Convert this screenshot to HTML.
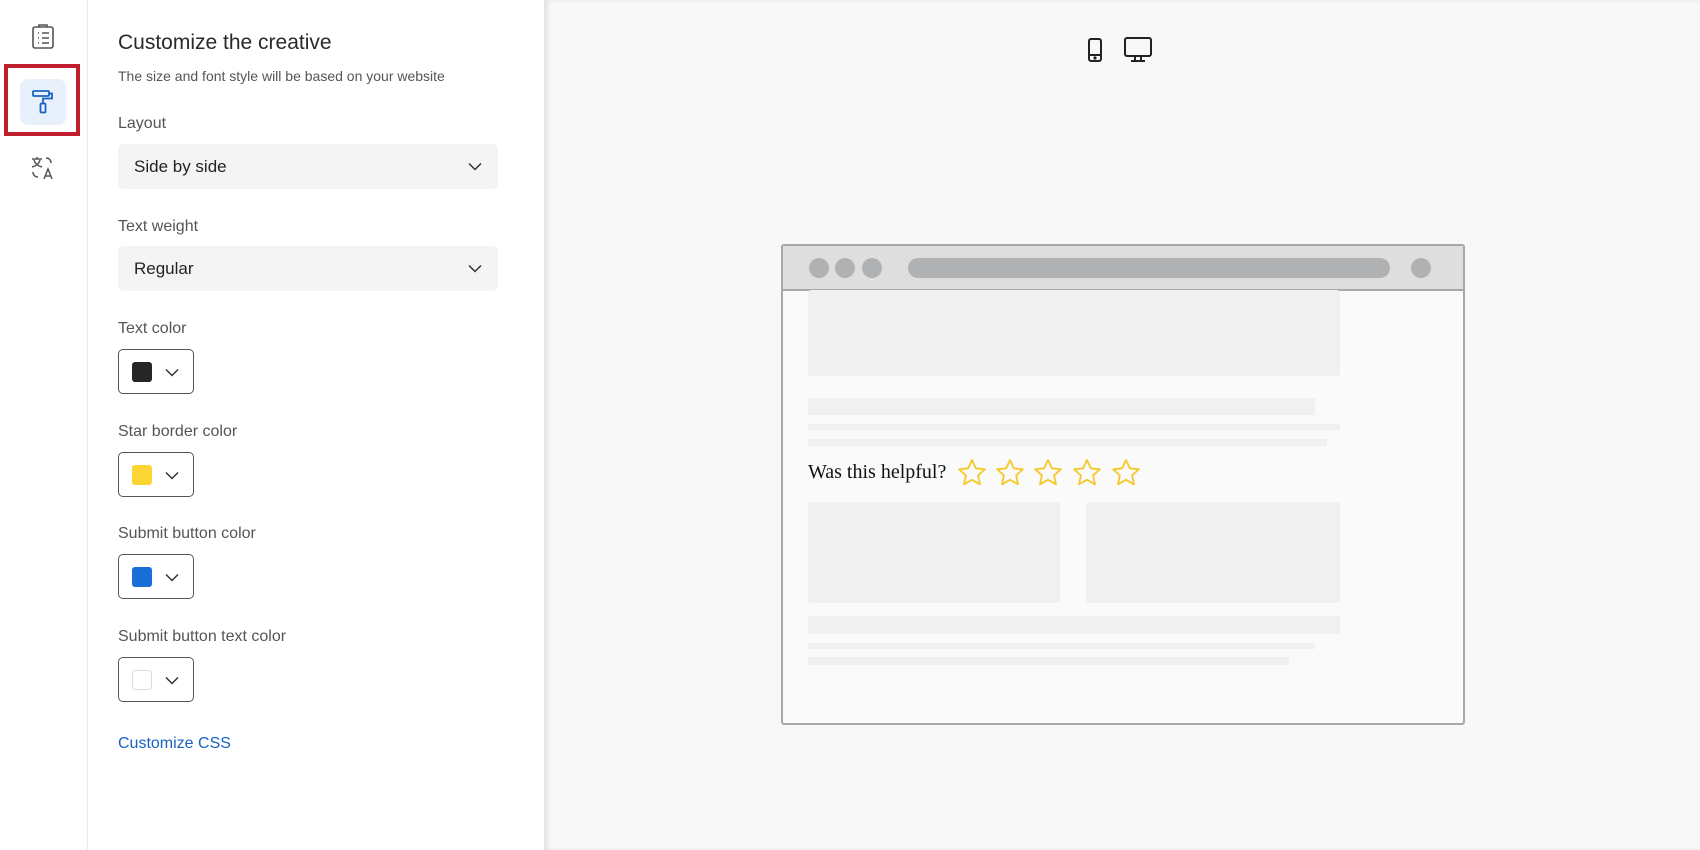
<!DOCTYPE html>
<html><head><style>
*{box-sizing:border-box;margin:0;padding:0}
body{width:1700px;height:850px;overflow:hidden;font-family:"Liberation Sans",sans-serif;background:#fff;position:relative;color:#32363a}
.a{position:absolute}
.lbl{position:absolute;left:118px;font-size:16px;color:#555}
.sel{position:absolute;left:118px;width:380px;height:45px;background:#f4f4f5;border-radius:6px;font-size:17px;color:#222;padding:13px 16px}
.chev{position:absolute;right:16px;top:18px}
.sw{position:absolute;left:118px;width:76px;height:45px;border:1px solid #555;border-radius:5px}
.sw i{position:absolute;left:13px;top:12px;width:20px;height:20px;border-radius:3px}
.sw svg{position:absolute;left:46px;top:18px}
.g{position:absolute;background:#f0f0f0}
</style></head><body>
<div class="a" style="left:87px;top:0;width:1px;height:850px;background:#eaeaea"></div>
<svg class="a" style="left:30px;top:22px" width="26" height="28" viewBox="0 0 26 28" fill="none" stroke="#555" stroke-width="1.6"><rect x="3" y="5" width="20" height="21" rx="2"/><path d="M9 5V3h8v2"/><path d="M8 11h1M8 16h1M8 21h1M12 11h7M12 16h7M12 21h7"/></svg>
<div class="a" style="left:4px;top:64px;width:76px;height:72px;border:4px solid #c0202e"></div>
<div class="a" style="left:20px;top:79px;width:46px;height:46px;background:#e8f0fb;border-radius:8px"></div>
<svg class="a" style="left:30px;top:88px" width="26" height="28" viewBox="0 0 26 28" fill="none" stroke="#1a62c2" stroke-width="1.8"><rect x="3" y="3" width="16" height="5" rx="1"/><path d="M19 5.5h3v5H13v5"/><rect x="10.5" y="15.5" width="5" height="9" rx="1"/></svg>
<svg class="a" style="left:30px;top:155px" width="26" height="26" viewBox="0 0 26 26" fill="none" stroke="#555" stroke-width="1.5"><path d="M2 4h10M7 2v2M4 5c1 4 4 6 8 7M10 5c-1 4-4 6-8 7"/><path d="M16 3c3 0 5 2 5 5"/><path d="M3 17c0 3 2 5 5 5"/><path d="M14 24l4-10 4 10M15.5 21h5"/></svg>
<div class="a" style="left:118px;top:31px;font-size:21px;color:#2a2a2a">Customize the creative</div>
<div class="a" style="left:118px;top:68px;font-size:14px;color:#555">The size and font style will be based on your website</div>
<div class="lbl" style="top:115px">Layout</div>
<div class="sel" style="top:144px">Side by side<svg class="chev" width="14" height="9" viewBox="0 0 14 9" fill="none" stroke="#333" stroke-width="1.5"><path d="M1 1.5l6 6 6-6"/></svg></div>
<div class="lbl" style="top:218px">Text weight</div>
<div class="sel" style="top:246px">Regular<svg class="chev" width="14" height="9" viewBox="0 0 14 9" fill="none" stroke="#333" stroke-width="1.5"><path d="M1 1.5l6 6 6-6"/></svg></div>
<div class="lbl" style="top:320px">Text color</div>
<div class="sw" style="top:349px"><i style="background:#262626"></i><svg width="14" height="9" viewBox="0 0 14 9" fill="none" stroke="#333" stroke-width="1.5"><path d="M1 1.5l6 6 6-6"/></svg></div>
<div class="lbl" style="top:423px">Star border color</div>
<div class="sw" style="top:452px"><i style="background:#fcd535"></i><svg width="14" height="9" viewBox="0 0 14 9" fill="none" stroke="#333" stroke-width="1.5"><path d="M1 1.5l6 6 6-6"/></svg></div>
<div class="lbl" style="top:525px">Submit button color</div>
<div class="sw" style="top:554px"><i style="background:#1a6ed8"></i><svg width="14" height="9" viewBox="0 0 14 9" fill="none" stroke="#333" stroke-width="1.5"><path d="M1 1.5l6 6 6-6"/></svg></div>
<div class="lbl" style="top:628px">Submit button text color</div>
<div class="sw" style="top:657px"><i style="background:#fff;border:1px solid #ddd"></i><svg width="14" height="9" viewBox="0 0 14 9" fill="none" stroke="#333" stroke-width="1.5"><path d="M1 1.5l6 6 6-6"/></svg></div>
<div class="a" style="left:118px;top:735px;font-size:16px;color:#1a62c2">Customize CSS</div>

<div class="a" style="left:544px;top:0;width:1156px;height:850px;background:#f8f8f8;box-shadow:inset 3px 0 4px rgba(0,0,0,0.08);border-left:1px solid #e4e4e4"></div>
<svg class="a" style="left:1086px;top:37px" width="18" height="26" viewBox="0 0 18 26" fill="none" stroke="#222" stroke-width="2"><rect x="3" y="2" width="12" height="22" rx="2"/><path d="M3 18h12"/><circle cx="9" cy="21" r=".6" fill="#222"/></svg>
<svg class="a" style="left:1122px;top:36px" width="32" height="28" viewBox="0 0 32 28" fill="none" stroke="#222" stroke-width="2"><rect x="3" y="2" width="26" height="18" rx="2"/><path d="M13 20v4M19 20v4M9 25h14"/></svg>

<div class="a" style="left:781px;top:244px;width:684px;height:481px;border:2px solid #a8a8a8;border-radius:3px;background:#fafafa">
<div class="a" style="left:0;top:0;width:680px;height:45px;background:#dedede;border-bottom:2px solid #a8a8a8"></div>
<div class="a" style="left:26px;top:12px;width:20px;height:20px;border-radius:50%;background:#b0b1b3"></div>
<div class="a" style="left:52px;top:12px;width:20px;height:20px;border-radius:50%;background:#b0b1b3"></div>
<div class="a" style="left:79px;top:12px;width:20px;height:20px;border-radius:50%;background:#b0b1b3"></div>
<div class="a" style="left:125px;top:12px;width:482px;height:20px;border-radius:10px;background:#b0b1b3"></div>
<div class="a" style="left:628px;top:12px;width:20px;height:20px;border-radius:50%;background:#b0b1b3"></div>
</div>
<div class="g" style="left:808px;top:290px;width:532px;height:86px;border-radius:3px"></div>
<div class="g" style="left:808px;top:398px;width:507px;height:17px"></div>
<div class="g" style="left:808px;top:424px;width:532px;height:6px"></div>
<div class="g" style="left:808px;top:439px;width:519px;height:7px"></div>
<div class="a" style="left:808px;top:461px;font-family:'Liberation Serif',serif;font-size:20px;color:#111">Was this helpful?</div>
<svg class="a" style="left:957px;top:458px" width="190" height="30" viewBox="0 0 190 30" fill="none" stroke="#f5c829" stroke-width="1.8" stroke-linejoin="round">
<g id="s"><path d="M15 2l3.8 8.3 9 1-6.7 6.1 1.9 8.9L15 21.8 7 26.3l1.9-8.9L2.2 11.3l9-1z"/></g>
<use href="#s" x="38"/><use href="#s" x="76"/><use href="#s" x="115"/><use href="#s" x="154"/></svg>
<div class="g" style="left:808px;top:502px;width:252px;height:101px;border-radius:3px"></div>
<div class="g" style="left:1086px;top:502px;width:254px;height:101px;border-radius:3px"></div>
<div class="g" style="left:808px;top:616px;width:532px;height:18px"></div>
<div class="g" style="left:808px;top:643px;width:507px;height:6px"></div>
<div class="g" style="left:808px;top:657px;width:481px;height:8px"></div>
</body></html>
